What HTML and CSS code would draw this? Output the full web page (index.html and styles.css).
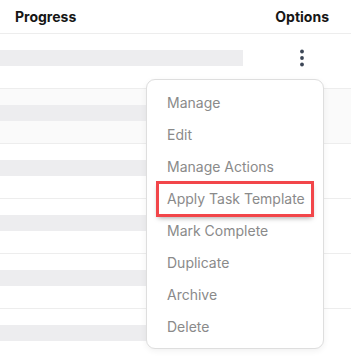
FILE: index.html
```html
<!DOCTYPE html>
<html lang="en">
<head>
    <meta charset="UTF-8">
    <meta name="viewport" content="width=device-width, initial-scale=1.0">
    <title>Tasks</title>
    <link rel="stylesheet" href="styles.css">
</head>
<body>
    <div class="table">
      <div class="table-head">
        <span class="col-progress">Progress</span>
        <span class="col-options">Options</span>
      </div>

      <div class="table-row">
        <div class="col-progress"><div class="bar"></div></div>
        <div class="col-options">
          <svg class="dots" width="6" height="18" viewBox="0 0 6 18">
            <circle cx="3" cy="2.5" r="1.9" />
            <circle cx="3" cy="9" r="1.9" />
            <circle cx="3" cy="15.5" r="1.9" />
          </svg>
        </div>
      </div>
      <div class="table-row striped">
        <div class="col-progress"><div class="bar"></div></div>
        <div class="col-options"></div>
      </div>
      <div class="table-row">
        <div class="col-progress"><div class="bar"></div></div>
        <div class="col-options"></div>
      </div>
      <div class="table-row">
        <div class="col-progress"><div class="bar"></div></div>
        <div class="col-options"></div>
      </div>
      <div class="table-row">
        <div class="col-progress"><div class="bar"></div></div>
        <div class="col-options"></div>
      </div>
      <div class="table-row">
        <div class="col-progress"><div class="bar"></div></div>
        <div class="col-options"></div>
      </div>
    </div>

    <div class="menu">
      <a class="menu-item">Manage</a>
      <a class="menu-item">Edit</a>
      <a class="menu-item">Manage Actions</a>
      <a class="menu-item marked">Apply Task Template</a>
      <a class="menu-item">Mark Complete</a>
      <a class="menu-item">Duplicate</a>
      <a class="menu-item">Archive</a>
      <a class="menu-item">Delete</a>
    </div>
</body>
</html>
```

FILE: styles.css
```css
body {
  margin: 0;
  font-family: "Inter", "Liberation Sans", sans-serif;
  background: #fff;
  overflow: hidden;
}
.table {
  width: 351px;
}
.table-head {
  display: flex;
  justify-content: space-between;
  align-items: center;
  height: 33px;
  border-bottom: 1px solid #ededed;
  font-size: 14px;
  font-weight: 700;
  color: #161616;
}
.table-head .col-progress {
  padding-left: 15px;
}
.table-head .col-options {
  padding-right: 22px;
}
.table-row {
  display: flex;
  justify-content: space-between;
  align-items: center;
  height: 54px;
  border-bottom: 1px solid #ededed;
}
.table-row.striped {
  background: #fafafa;
}
.bar {
  width: 243px;
  height: 16px;
  margin-top: -6px;
  background: #ededef;
}
.table-row .col-options {
  width: 54px;
  margin-right: 22px;
  display: flex;
  justify-content: center;
}
.dots {
  fill: #3c4656;
  margin-top: -7px;
}
.menu {
  position: absolute;
  top: 79px;
  left: 146px;
  width: 176px;
  padding: 7px 0 5px;
  display: flex;
  flex-direction: column;
  align-items: flex-start;
  background: #fff;
  border: 1px solid #dedede;
  border-radius: 9px;
  box-shadow: 0 2px 6px rgba(0, 0, 0, 0.06);
}
.menu-item {
  height: 32px;
  line-height: 32px;
  margin-left: 11px;
  padding: 0 9px;
  font-size: 14px;
  color: #8a8a8a;
}
.menu-item.marked {
  padding-right: 7px;
  outline: 3px solid #f2464a;
  outline-offset: -1px;
  box-shadow: 0 3px 5px rgba(0, 0, 0, 0.35);
}
```
